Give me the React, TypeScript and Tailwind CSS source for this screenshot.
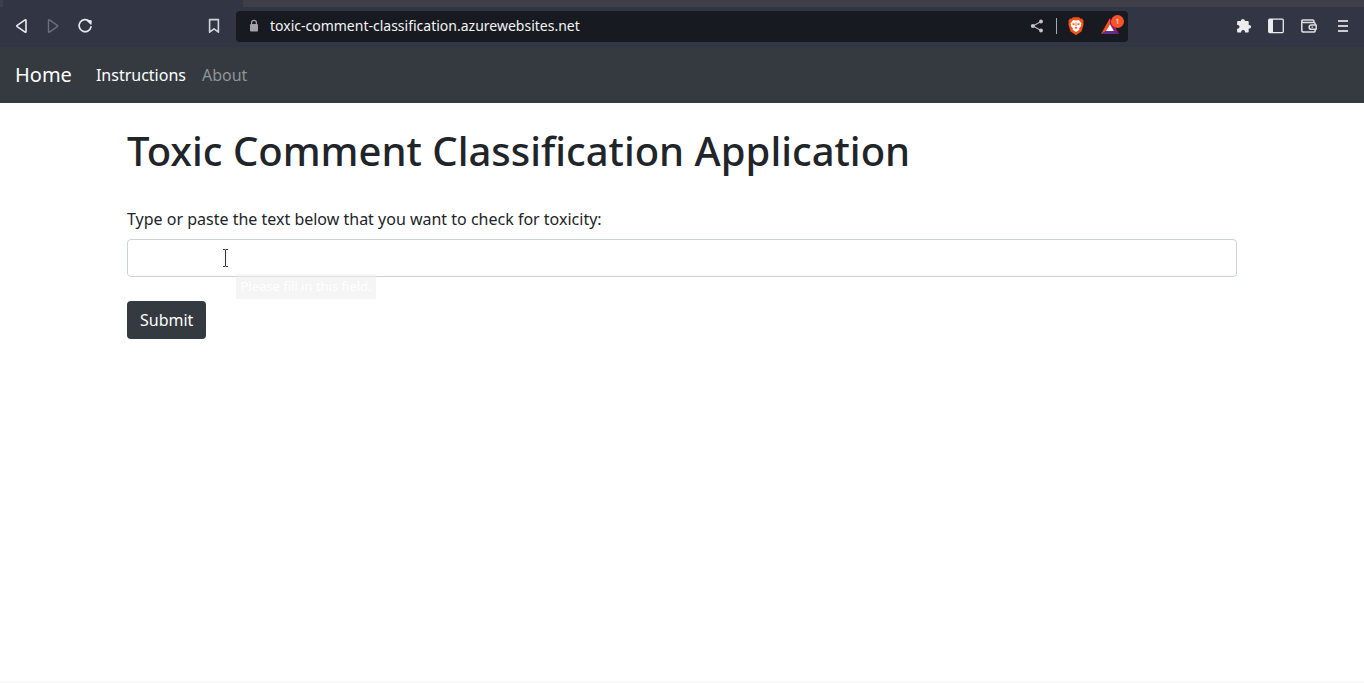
import React from "react";

function ToolButton({ label, wide = false, children }: { label: string; wide?: boolean; children: React.ReactNode }) {
  return (
    <button type="button" aria-label={label} className={`flex h-8 shrink-0 items-center justify-center ${wide ? "w-[34px]" : "w-8"}`}>
      {children}
    </button>
  );
}

function BackIcon() {
  return (
    <svg width="16" height="16" viewBox="0 0 16 16" fill="none" stroke="#e9e9ec" strokeWidth="1.6" strokeLinejoin="round">
      <path d="M13 2.3v11.4c0 .5-.5.6-.9.4L4.200 8.700c-.5-.4-.5-1 0-1.400l7.900-5.400c.4-.2.900-.1.900.4Z" />
    </svg>
  );
}

function ForwardIcon() {
  return (
    <svg width="16" height="16" viewBox="0 0 16 16" fill="none" stroke="#6d6f7b" strokeWidth="1.4" strokeLinejoin="round">
      <path d="M3.500 2.300v11.400c0 .5.500.6.900.4l7.900-5.400c.5-.4.500-1 0-1.400L4.400 1.900c-.4-.2-.9-.1-.9.400Z" />
    </svg>
  );
}

function ReloadIcon() {
  return (
    <svg width="16" height="16" viewBox="0 0 16 16" fill="none">
      <path d="M12.200 3.200A6 6 0 1 0 14 8.800" stroke="#e9e9ec" strokeWidth="1.7" strokeLinecap="round" />
      <path d="M10.200 1.800 14.200 2.200c.4 0 .6.300.6.700l-.3 3.300c-.1.500-.6.700-1 .4L9.800 3c-.4-.5-.2-1.200.4-1.200Z" fill="#e9e9ec" />
    </svg>
  );
}

function BookmarkIcon() {
  return (
    <svg width="16" height="16" viewBox="0 0 16 16" fill="none" stroke="#d4d4d8" strokeWidth="1.6" strokeLinejoin="round">
      <path d="M3.600 1.600h8.800v12.600L8 10.800l-4.400 3.400Z" />
    </svg>
  );
}

function LockIcon() {
  return (
    <svg width="10" height="14" viewBox="0 0 10 14" fill="none">
      <rect x="1" y="5" width="8" height="7.500" rx="1" fill="#a2a3a8" />
      <path d="M2.600 5.500V3.800a2.400 2.400 0 0 1 4.800 0v1.700" stroke="#a2a3a8" strokeWidth="1.200" />
    </svg>
  );
}

function ShareIcon() {
  return (
    <svg width="14" height="14" viewBox="0 0 14 14">
      <path d="M11 2.500 3 7l8 4.500" fill="none" stroke="#b9babf" strokeWidth="1.200" />
      <circle cx="11" cy="2.500" r="1.900" fill="#c4c5c9" />
      <circle cx="2.800" cy="7" r="2" fill="#c4c5c9" />
      <circle cx="11" cy="11.500" r="1.900" fill="#c4c5c9" />
    </svg>
  );
}

function LionIcon() {
  return (
    <svg width="16" height="18" viewBox="0 0 16 18">
      <path d="M5 .2h6l1.400 1.500 1.600-.2L15.700 4l-.5 1.400.5 1.500-1.900 6.600c-.2.700-.6 1.200-1.200 1.600L8.600 17.700c-.4.300-.8.300-1.200 0L3.400 15.100c-.6-.4-1-.9-1.200-1.600L.3 6.900l.5-1.500L.3 4 2 1.500l1.600.2Z" fill="#fb4f14" />
      <path d="M5.200 3 8 3.500 10.800 3l2.800 3.400-.6 1.300.3 1-2.200 2.700.3 1.400L8 15l-3.400-2.200.3-1.400L2.700 8.700l.3-1-.6-1.300Z" fill="#fff" />
      <path d="m4.300 6.200 2.500.4-.5 1.600-1.600-.5ZM11.700 6.200l-2.500.4.5 1.600 1.600-.5ZM6.400 10.400 8 9.700l1.600.7L8 11.900ZM7.700 5h.6l.2 4h-1Z" fill="#fb4f14" />
    </svg>
  );
}

function RewardsIcon() {
  return (
    <svg width="18" height="17" viewBox="0 0 18 17">
      <path d="M9 0 0 16l5.400-3L9 6.500Z" fill="#ff4f1a" />
      <path d="m9 0 9 16-5.400-3L9 6.500Z" fill="#9b1f63" />
      <path d="M0 16h18l-5.400-3.200H5.400Z" fill="#662d91" />
      <path d="m9 6.200 3.900 6.800H5.100Z" fill="#fff" />
    </svg>
  );
}

function PuzzleIcon() {
  return (
    <svg width="16" height="16" viewBox="0 0 16 16" fill="#ececee">
      <path d="M6.900.9c1.200 0 1.900.8 1.900 1.800v.4h2.700c.7 0 1.200.5 1.200 1.200v2.600h.5c1.100 0 1.900.8 1.900 1.800s-.8 1.800-1.900 1.800h-.5v2.900c0 .7-.5 1.200-1.200 1.200H9v-.5c0-1.100-.8-2-1.900-2s-1.900.9-1.900 2v.5H2.300c-.7 0-1.200-.5-1.200-1.200v-2.700h.5c1.100 0 1.900-.8 1.900-1.900S2.700 7 1.600 7h-.5V4.300c0-.7.5-1.200 1.200-1.200H5v-.4C5 1.700 5.800.9 6.900.9Z" />
    </svg>
  );
}

function SidebarIcon() {
  return (
    <svg width="16" height="16" viewBox="0 0 16 16">
      <rect x="0.700" y="1.200" width="14.600" height="13.400" rx="1" fill="none" stroke="#ececee" strokeWidth="1.300" />
      <path d="M1 1h4v14H1Z" fill="#ececee" />
    </svg>
  );
}

function WalletIcon() {
  return (
    <svg width="16" height="14" viewBox="0 0 16 14" fill="none" stroke="#dedee2" strokeWidth="1.500" strokeLinejoin="round">
      <path d="M14.200 5.800V4.900c0-.9-.6-1.500-1.500-1.500H2.300C1.400 3.400.8 2.900.8 2.100S1.400.9 2.200.9h9.600c.7 0 1.100.4 1.100 1v1.300M.8 2.100v9.100c0 1.100.8 1.900 1.900 1.900h9.600c1.100 0 1.900-.8 1.900-1.900v-.8" />
      <path d="M15.200 6H10.300a2.100 2.100 0 0 0 0 4.300h4.900Z" />
      <path d="M10.500 8.100h1.500" strokeWidth="1.200" />
    </svg>
  );
}

function MenuIcon() {
  return (
    <svg width="10" height="14" viewBox="0 0 10 14" fill="#cbcbd0">
      <path d="M0 1h10v2H0ZM0 6h10v2H0ZM0 11h10v2H0Z" />
    </svg>
  );
}

function TextCursor() {
  return (
    <svg width="7" height="18" viewBox="0 0 7 18" fill="none" className="drop-shadow-sm">
      <path d="M1 .5h2l.5.5.500-.5h2M1 17.500h2l.5-.5.500.5h2M3.500 1v16" stroke="#333" />
    </svg>
  );
}

function BrowserToolbar() {
  return (
    <header className="bg-[#323544]">
      <div className="flex h-[7px] bg-[#403f49]">
        <div className="ml-[3px] w-60 bg-[#323544]" />
      </div>
      <div className="flex h-10 items-center pb-[2px]">
        <div className="flex w-[236px] shrink-0 items-center pr-[6px] pl-[5px]">
          <ToolButton label="Back"><BackIcon /></ToolButton>
          <ToolButton label="Forward"><ForwardIcon /></ToolButton>
          <ToolButton label="Reload"><ReloadIcon /></ToolButton>
          <div className="flex-1" />
          <ToolButton label="Bookmark"><BookmarkIcon /></ToolButton>
        </div>
        <div className="flex h-[31px] min-w-0 flex-1 items-center rounded bg-[#181a21] pr-1 pl-[13px]">
          <LockIcon />
          <input
            aria-label="Address"
            readOnly
            value="toxic-comment-classification.azurewebsites.net"
            className="ml-[11px] min-w-0 flex-1 bg-transparent text-sm text-[#f4f4f5] outline-none"
          />
          <button type="button" aria-label="Share" className="mr-3 shrink-0"><ShareIcon /></button>
          <span className="h-4 w-px bg-[#a9aaae]" />
          <button type="button" aria-label="Shields" className="ml-[11px] shrink-0"><LionIcon /></button>
          <button type="button" aria-label="Rewards" className="relative ml-[17px] shrink-0 pr-[5px]">
            <RewardsIcon />
            <span className="absolute -top-[3px] right-0 flex size-[13px] items-center justify-center rounded-full bg-[#fb542b] text-[7px] leading-none text-white">1</span>
          </button>
        </div>
        <div className="flex w-[236px] shrink-0 items-center justify-end pr-1">
          <ToolButton label="Extensions"><PuzzleIcon /></ToolButton>
          <ToolButton label="Sidebar"><SidebarIcon /></ToolButton>
          <ToolButton label="Wallet" wide><WalletIcon /></ToolButton>
          <ToolButton label="Menu" wide><MenuIcon /></ToolButton>
        </div>
      </div>
    </header>
  );
}

export default function App() {
  return (
    <div className="flex min-h-screen flex-col bg-white font-['Noto_Sans',sans-serif] text-base text-[#212529]">
      <BrowserToolbar />
      <nav className="flex h-14 items-center bg-[#343a40] px-[15px]">
        <a href="#home" className="mr-4 text-xl text-white">Home</a>
        <a href="#instructions" className="px-2 text-white">Instructions</a>
        <a href="#about" className="px-2 text-[#919497]">About</a>
      </nav>
      <main className="mx-auto w-full max-w-[1140px] flex-1 px-[15px] pt-6">
        <h1 className="text-[40px] leading-[48px] font-medium">Toxic Comment Classification Application</h1>
        <form className="mt-8" onSubmit={(event) => event.preventDefault()}>
          <label htmlFor="comment" className="mb-2 block leading-6">
            Type or paste the text below that you want to check for toxicity:
          </label>
          <div className="relative">
            <input
              id="comment"
              type="text"
              required
              className="block h-[38px] w-full rounded border border-[#cad5d3] bg-white px-3 outline-none"
            />
            <div className="pointer-events-none absolute top-[10px] left-[95px]"><TextCursor /></div>
            <div role="tooltip" className="pointer-events-none absolute top-[35px] left-[109px] flex h-[25px] w-[140px] items-center justify-center bg-[#ededed]/55 text-[13px] whitespace-nowrap text-white">
              Please fill in this field.
            </div>
          </div>
          <button type="submit" className="mt-6 block h-[38px] rounded bg-[#343a40] px-[13px] text-white">Submit</button>
        </form>
      </main>
      <footer className="h-[2px] bg-[#f9f9f9]" />
    </div>
  );
}
